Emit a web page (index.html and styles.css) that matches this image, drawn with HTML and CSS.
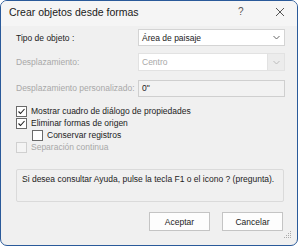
FILE: index.html
```html
<!DOCTYPE html>
<html lang="es">
<head>
  <meta charset="UTF-8" />
  <title>Crear objetos desde formas</title>
  <link rel="stylesheet" href="styles.css">
</head>
<body>
  <div class="dialog">
    <!-- barra de titulo -->
    <div class="titlebar">
      <span class="title">Crear objetos desde formas</span>
      <span class="tb-help">?</span>
      <span class="tb-close">
        <svg width="10" height="10" viewBox="0 0 10 10"><path d="M1 1L9 9M9 1L1 9" stroke="#555" stroke-width="1" fill="none"/></svg>
      </span>
    </div>

    <div class="content">
      <div class="form">
        <label class="lbl">Tipo de objeto :</label>
        <div class="combo">
          <span class="combo-text">Área de paisaje</span>
          <span class="combo-arrow">
            <svg width="7" height="5" viewBox="0 0 7 5"><path d="M0.5 1L3.5 4L6.5 1" stroke="#666" stroke-width="1" fill="none"/></svg>
          </span>
        </div>

        <label class="lbl disabled">Desplazamiento:</label>
        <div class="combo combo-off">
          <span class="combo-text">Centro</span>
          <span class="combo-arrow">
            <svg width="7" height="5" viewBox="0 0 7 5"><path d="M0.5 1L3.5 4L6.5 1" stroke="#bbb" stroke-width="1" fill="none"/></svg>
          </span>
        </div>

        <label class="lbl disabled">Desplazamiento personalizado:</label>
        <div class="textbox">0"</div>
      </div>

      <div class="checks">
        <div class="check">
          <span class="box"><svg width="9" height="9" viewBox="0 0 9 9"><path d="M1.5 4.5L3.5 6.5L7.5 2" stroke="#222" stroke-width="1.1" fill="none"/></svg></span>
          <span>Mostrar cuadro de diálogo de propiedades</span>
        </div>
        <div class="check">
          <span class="box"><svg width="9" height="9" viewBox="0 0 9 9"><path d="M1.5 4.5L3.5 6.5L7.5 2" stroke="#222" stroke-width="1.1" fill="none"/></svg></span>
          <span>Eliminar formas de origen</span>
        </div>
        <div class="check sub">
          <span class="box"></span>
          <span>Conservar registros</span>
        </div>
        <div class="check disabled">
          <span class="box"></span>
          <span>Separación continua</span>
        </div>
      </div>

      <div class="info">Si desea consultar Ayuda, pulse la tecla F1 o el icono ? (pregunta).</div>

      <div class="buttons">
        <button class="btn">Aceptar</button>
        <button class="btn">Cancelar</button>
      </div>
    </div>

    <svg class="grip" width="8" height="8" viewBox="0 0 8 8">
      <rect x="6" y="0" width="1" height="1" fill="#aaa"/>
      <rect x="4" y="2" width="1" height="1" fill="#aaa"/>
      <rect x="6" y="2" width="1" height="1" fill="#aaa"/>
      <rect x="2" y="4" width="1" height="1" fill="#aaa"/>
      <rect x="4" y="4" width="1" height="1" fill="#aaa"/>
      <rect x="6" y="4" width="1" height="1" fill="#aaa"/>
      <rect x="0" y="6" width="1" height="1" fill="#aaa"/>
      <rect x="2" y="6" width="1" height="1" fill="#aaa"/>
      <rect x="4" y="6" width="1" height="1" fill="#aaa"/>
      <rect x="6" y="6" width="1" height="1" fill="#aaa"/>
    </svg>
  </div>
</body>
</html>
```

FILE: styles.css
```css
body {
  margin: 0;
  background-color: #ffffff;
  font-family: 'Liberation Sans', Arial, sans-serif;
  font-size: 8.5px;
  color: #222222;
}

.dialog {
  position: relative;
  width: 298px;
  height: 246px;
  box-sizing: border-box;
  border: 1px solid #2a5a9a;
  border-radius: 7px;
  background-color: #f0f0f0;
  overflow: hidden;
}

.titlebar {
  display: flex;
  align-items: center;
  height: 25px;
  padding-left: 8px;
  background-color: #f5f5f5;
}

.title {
  flex: 1;
  font-size: 10.5px;
  color: #1a1a1a;
  padding-bottom: 4px;
}

.tb-help {
  width: 14px;
  margin-right: 23px;
  font-size: 10px;
  color: #555555;
  padding-bottom: 4px;
}

.tb-close {
  display: flex;
  margin-right: 12px;
  padding-bottom: 4px;
}

.content {
  padding: 3px 13px 0 15px;
}

.form {
  display: grid;
  grid-template-columns: 122px 147px;
  row-gap: 7px;
  align-items: center;
}

.lbl.disabled,
.check.disabled {
  color: #a8a8a8;
}

.combo {
  display: flex;
  align-items: center;
  height: 17px;
  box-sizing: border-box;
  border: 1px solid #d4d4d4;
  background-color: #ffffff;
}

.combo-text {
  flex: 1;
  padding-left: 3px;
}

.combo-arrow {
  display: flex;
  align-items: center;
  justify-content: center;
  width: 16px;
  align-self: stretch;
}

.combo-off {
  height: 18px;
  border-color: #e2e2e2;
  color: #a8a8a8;
}

.combo-off .combo-arrow {
  background-color: #ececec;
  border-left: 1px solid #e2e2e2;
}

.textbox {
  height: 17px;
  margin-top: 2px;
  box-sizing: border-box;
  border: 1px solid #cfcfcf;
  background-color: #f2f2f2;
  padding-left: 3px;
  line-height: 15px;
}

.checks {
  margin-top: 8px;
}

.check {
  display: flex;
  align-items: center;
  gap: 4px;
  height: 12px;
}

.check .box {
  display: flex;
  width: 9px;
  height: 9px;
  border: 1px solid #6a6a6a;
  background-color: #ffffff;
}

.check.sub {
  padding-left: 16px;
}

.check.disabled .box {
  border-color: #d0d0d0;
  background-color: #f4f4f4;
}

.info {
  margin-top: 16px;
  height: 33px;
  box-sizing: border-box;
  border: 1px solid #dadada;
  border-radius: 2px;
  padding: 4px 5px;
  width: 268px;
}

.buttons {
  display: flex;
  justify-content: flex-end;
  gap: 12px;
  margin-top: 10px;
  padding-right: 1px;
}

.btn {
  width: 61px;
  height: 19px;
  font-family: 'Liberation Sans', Arial, sans-serif;
  font-size: 8.5px;
  color: #222222;
  background-color: #fdfdfd;
  border: 1px solid #c4c4c4;
  border-radius: 0;
  padding: 0;
}

.grip {
  position: absolute;
  right: 5px;
  bottom: 6px;
}
```
